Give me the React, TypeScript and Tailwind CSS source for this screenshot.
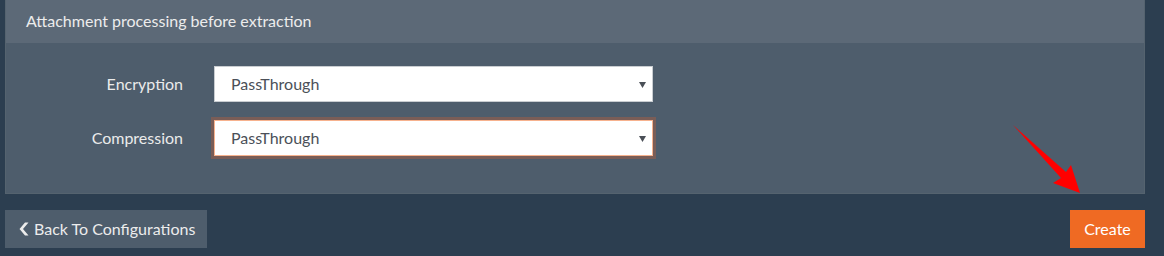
import React from "react";

function Select({ focused }: { focused?: boolean }) {
  return (
    <div
      className={
        "relative flex h-[36px] w-[439px] items-center bg-white pl-[16px] text-[16px] text-[#4b5058] " +
        (focused
          ? "border border-[#f7b28e] shadow-[0_0_0_3px_#7a5d57]"
          : "border border-[#c9cdd1]")
      }
    >
      <span>PassThrough</span>
      <svg className="absolute right-[6px] top-[15px]" width="7" height="6" viewBox="0 0 7 6">
        <path d="M0 0 H7 L3.5 6 Z" fill="#4a4f57" />
      </svg>
    </div>
  );
}

export default function App() {
  return (
    <div
      className="relative flex h-[256px] w-[1164px] flex-col bg-[#2c3e50] pl-[5px] pr-[19px] text-[#ebebeb]"
      style={{ fontFamily: "Lato, 'Open Sans', sans-serif" }}
    >
      <div className="flex flex-col border-x border-b border-[#55636f]">
        <div className="flex h-[43px] items-center bg-[#5c6977] pl-[20px] pb-[1px] text-[16px] text-[#ececec]">
          Attachment processing before extraction
        </div>
        <div className="flex h-[150px] flex-col gap-[18px] bg-[#4e5d6c] pt-[23px]">
          <div className="flex items-center">
            <div className="w-[177px] text-right text-[16px]">Encryption</div>
            <div className="ml-[31px]">
              <Select />
            </div>
          </div>
          <div className="flex items-center">
            <div className="w-[177px] text-right text-[16px]">Compression</div>
            <div className="ml-[31px]">
              <Select focused />
            </div>
          </div>
        </div>
      </div>
      <div className="mt-[16px] flex items-center justify-between">
        <button className="flex h-[38px] w-[202px] items-center gap-[4px] bg-[#4e5d6c] pl-[13px] text-[16px] text-[#ececec]">
          <svg width="12" height="14" viewBox="0 0 12 14">
            <polygon points="7,0.5 10.5,0.5 5,7 10.5,13.5 7,13.5 1.5,7" fill="#ececec" />
          </svg>
          <span>Back To Configurations</span>
        </button>
        <button className="flex h-[38px] w-[75px] items-center justify-center bg-[#ef6a23] text-[16px] text-white">
          Create
        </button>
      </div>
      <svg className="pointer-events-none absolute left-0 top-0" width="1164" height="256" viewBox="0 0 1164 256">
        <polygon
          points="1013,125 1066,172 1071,165 1080,193 1053,183 1061,178"
          fill="#ff0000"
        />
      </svg>
    </div>
  );
}
